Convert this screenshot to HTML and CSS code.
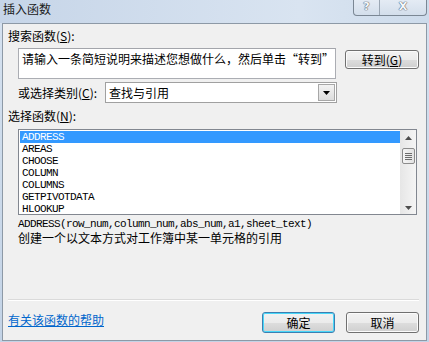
FILE: index.html
```html
<!DOCTYPE html>
<html lang="zh-CN">
<head>
<meta charset="UTF-8">
<title>插入函数</title>
<link rel="stylesheet" href="styles.css">
</head>
<body>
<div class="window">
  <div class="titlebar">
    <span class="title">插入函数</span>
    <div class="caption-btns">
      <span class="cap-btn help">?</span>
      <span class="cap-btn close">X</span>
    </div>
  </div>

  <div class="client">
    <div class="label first">搜索函数(<u>S</u>):</div>
    <div class="search-row">
      <div class="textbox search">请输入一条简短说明来描述您想做什么，然后单击“转到”</div>
      <button class="btn go">转到(<u>G</u>)</button>
    </div>

    <div class="cat-row">
      <span class="cat-label">或选择类别(<u>C</u>):</span>
      <div class="combo">
        <span class="combo-text">查找与引用</span>
        <span class="combo-btn">
          <svg width="7" height="4" viewBox="0 0 7 4"><path d="M0 0h7L3.5 4z" fill="#000"/></svg>
        </span>
      </div>
    </div>

    <div class="label">选择函数(<u>N</u>):</div>
    <div class="listbox">
      <ul class="items">
        <li class="selected">ADDRESS</li>
        <li>AREAS</li>
        <li>CHOOSE</li>
        <li>COLUMN</li>
        <li>COLUMNS</li>
        <li>GETPIVOTDATA</li>
        <li>HLOOKUP</li>
      </ul>
      <div class="scrollbar">
        <svg class="arrow" width="7" height="4" viewBox="0 0 7 4"><path d="M3.5 0L7 4H0z" fill="#4d4d4d"/></svg>
        <div class="thumb"><i></i><i></i><i></i><i></i></div>
        <svg class="arrow down" width="7" height="4" viewBox="0 0 7 4"><path d="M0 0h7L3.5 4z" fill="#4d4d4d"/></svg>
      </div>
    </div>

    <div class="syntax">ADDRESS(row_num,column_num,abs_num,a1,sheet_text)</div>
    <div class="desc">创建一个以文本方式对工作簿中某一单元格的引用</div>

    <div class="separator"></div>
    <div class="footer">
      <a class="help-link" href="#">有关该函数的帮助</a>
      <div class="footer-btns">
        <button class="btn ok">确定</button>
        <button class="btn">取消</button>
      </div>
    </div>
  </div>
</div>
</body>
</html>
```

FILE: styles.css
```css
* {
  box-sizing: border-box;
}

body {
  margin: 0;
  width: 429px;
  height: 342px;
  overflow: hidden;
  font-family: "Noto Sans CJK SC", "Liberation Sans", sans-serif;
  font-size: 12px;
  color: #000;
  background: linear-gradient(to bottom, #d6e2f0, #c3d3e6);
}

.window {
  height: 342px;
  display: flex;
  flex-direction: column;
}

/* 标题栏 */
.titlebar {
  height: 23px;
  display: flex;
  justify-content: space-between;
  align-items: flex-start;
  background: linear-gradient(to right, #c6d5e8, #d9e4f1 70%, #cddbeb);
}

.title {
  margin: 1px 0 0 3px;
  line-height: 15px;
  color: #1a1a1a;
}

.caption-btns {
  display: flex;
  margin-right: 2px;
  border: 1px solid #7b8794;
  border-top: none;
  border-radius: 0 0 4px 4px;
  overflow: hidden;
  background: linear-gradient(to bottom, #e4ebf4, #d3deeb);
}

.cap-btn {
  height: 15px;
  line-height: 14px;
  text-align: center;
  font-family: "DejaVu Sans", sans-serif;
  font-weight: bold;
  font-size: 11px;
  color: #f4f7fb;
  text-shadow: 0 0 1px #5c6673, 0 0 1px #5c6673, 0 0 1px #5c6673;
}

.help {
  width: 26px;
  border-right: 1px solid #9aa6b3;
}

.close {
  width: 46px;
}

/* 客户区 */
.client {
  flex: 1;
  margin: 0 2px 1px;
  border: 1px solid #8d99a6;
  background: #f0f0f0;
  display: flex;
  flex-direction: column;
  padding: 0 7px 7px 5px;
}

.label {
  line-height: 14px;
  margin-top: 6px;
}

.label.first {
  margin-top: 5px;
}

.search-row {
  display: flex;
  align-items: flex-start;
  margin: 5px 0 0 10px;
}

.textbox {
  background: #fff;
  border: 1px solid #abadb3;
  border-top-color: #a3a5ab;
}

.search {
  width: 318px;
  height: 31px;
  padding: 3px 3px;
  line-height: 14px;
  white-space: nowrap;
  overflow: hidden;
}

.btn {
  height: 21px;
  width: 73px;
  padding: 0;
  font-family: inherit;
  font-size: 12px;
  line-height: 18px;
  color: #000;
  border: 1px solid #707070;
  border-radius: 3px;
  background: linear-gradient(to bottom, #f2f2f2 0%, #ebebeb 50%, #dddddd 51%, #cfcfcf 100%);
  box-shadow: inset 0 0 0 1px #fbfbfb;
}

.go {
  width: 74px;
  height: 19px;
  line-height: 16px;
  margin: 2px 0 0 9px;
}

.cat-row {
  display: flex;
  align-items: center;
  margin: 3px 0 0 10px;
}

.cat-label {
  width: 87px;
  line-height: 14px;
}

.combo {
  width: 232px;
  height: 21px;
  display: flex;
  justify-content: space-between;
  align-items: center;
  background: #fff;
  border: 1px solid #a0a0a0;
  padding: 0 1px 0 3px;
}

.combo-btn {
  width: 17px;
  height: 17px;
  display: flex;
  align-items: center;
  justify-content: center;
  border: 1px solid #a7a7a7;
  background: linear-gradient(to bottom, #f3f3f3, #dcdcdc);
}

/* 函数列表 */
.listbox {
  display: flex;
  width: 399px;
  height: 86px;
  margin: 6px 0 0 10px;
  background: #fff;
  border: 1px solid #828790;
}

.items {
  flex: 1;
  list-style: none;
  margin: 0;
  padding: 1px 0 0 1px;
  font-family: "Liberation Mono", monospace;
  font-size: 11px;
  letter-spacing: -0.6px;
}

.items li {
  height: 12px;
  line-height: 12px;
  padding-left: 2px;
}

.items .selected {
  background: #3399ff;
  color: #fff;
}

.scrollbar {
  width: 16px;
  display: flex;
  flex-direction: column;
  align-items: center;
  background: linear-gradient(to right, #e6e6e6, #f5f5f5);
  padding: 6px 0 4px;
}

.arrow.down {
  margin-top: auto;
}

.thumb {
  width: 13px;
  height: 16px;
  margin-top: 8px;
  border: 1px solid #8c8c8c;
  border-radius: 2px;
  background: linear-gradient(to right, #f5f5f5, #e2e2e2);
  display: flex;
  flex-direction: column;
  align-items: center;
  justify-content: center;
  gap: 1px;
}

.thumb i {
  width: 7px;
  height: 1px;
  background: #6d6d6d;
}

.syntax {
  margin: 3px 0 0 10px;
  font-family: "Liberation Mono", monospace;
  font-size: 11px;
  letter-spacing: -0.6px;
  line-height: 12px;
}

.desc {
  margin: 1px 0 0 10px;
  line-height: 14px;
}

.separator {
  margin: auto 0 0 0;
  height: 2px;
  border-top: 1px solid #dadada;
  border-bottom: 1px solid #fff;
}

.footer {
  display: flex;
  justify-content: space-between;
  align-items: flex-start;
  margin-top: 11px;
}

.help-link {
  margin-top: 1px;
  line-height: 14px;
  color: #0066cc;
}

.footer-btns {
  display: flex;
  gap: 11px;
}

.ok {
  border-color: #3c7fb1;
  box-shadow: inset 0 0 0 1px #48d7f9;
}
```
